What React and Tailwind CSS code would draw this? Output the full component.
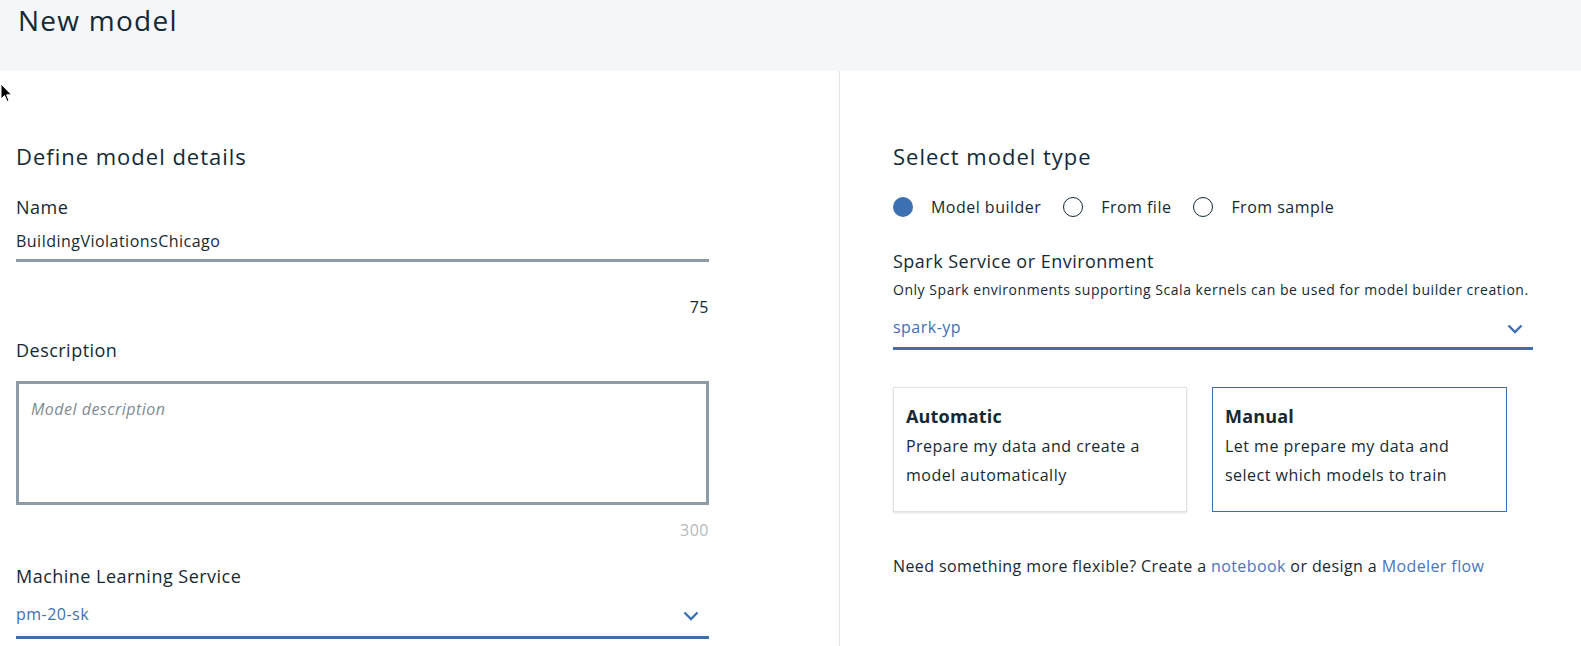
import React from "react";

function Chevron({ className = "" }) {
  return (
    <svg width="16" height="10" viewBox="0 0 16 10" className={className}>
      <path d="M1.5 1.5 L8 8 L14.5 1.5" fill="none" stroke="#3d70b2" strokeWidth="2.4" />
    </svg>
  );
}

function Radio({ checked, label }) {
  return (
    <div className="flex items-center">
      {checked ? (
        <span className="w-[20px] h-[20px] rounded-full bg-[#3d70b2] inline-block" />
      ) : (
        <span className="w-[20px] h-[20px] rounded-full border-[1.5px] border-[#152935] inline-block" />
      )}
      <span className="ml-[18px] text-[16px] leading-[24px] text-[#152935]">{label}</span>
    </div>
  );
}

export default function App() {
  return (
    <div
      className="relative w-[1581px] h-[646px] overflow-hidden bg-white text-[#152935] tracking-[0.03em]"
      style={{ fontFamily: "'Open Sans', 'Liberation Sans', sans-serif" }}
    >
      <header className="h-[71px] bg-[#f4f6fa] pl-[18px] pt-[2px]">
        <h1 className="text-[28px] leading-[36px] font-normal text-[#152935] tracking-[0.045em]">New model</h1>
      </header>

      <div className="flex h-[575px]">
        <section className="w-[839px] pl-[16px] pr-[130px] pt-[71px] flex flex-col">
          <h2 className="text-[22px] leading-[28px] font-normal tracking-[0.045em]">Define model details</h2>
          <div className="mt-[25px] text-[18px] leading-[24px]">Name</div>
          <div className="mt-[10px] pb-[6px] border-b-[3px] border-[#8c9ba5] text-[16px] leading-[24px]">
            BuildingViolationsChicago
          </div>
          <div className="mt-[33px] text-right text-[16px] leading-[24px]">75</div>
          <div className="mt-[19px] text-[18px] leading-[24px]">Description</div>
          <div className="mt-[19px] h-[124px] border-[3px] border-[#8c9ba5] px-[12px] pt-[13px]">
            <span className="italic text-[16px] leading-[24px] text-[#7f8b93]">Model description</span>
          </div>
          <div className="mt-[13px] text-right text-[16px] leading-[24px] text-[#b4b9bd]">300</div>
          <div className="mt-[22px] text-[18px] leading-[24px]">Machine Learning Service</div>
          <div className="mt-[14px] pb-[10px] border-b-[3px] border-[#3d70b2] flex items-center justify-between">
            <span className="text-[16px] leading-[24px] text-[#3d70b2]">pm-20-sk</span>
            <Chevron className="mr-[10px] mt-[4px]" />
          </div>
        </section>

        <div className="w-[1px] bg-[#dfe3e6]" />

        <section className="flex-1 pl-[53px] pr-[48px] pt-[71px] flex flex-col">
          <h2 className="text-[22px] leading-[28px] font-normal tracking-[0.045em]">Select model type</h2>
          <div className="mt-[25px] flex items-center gap-[22px] h-[24px]">
            <Radio checked label="Model builder" />
            <Radio label="From file" />
            <Radio label="From sample" />
          </div>
          <div className="mt-[30px] text-[18px] leading-[24px]">Spark Service or Environment</div>
          <div className="mt-[7px] text-[14px] leading-[20px] tracking-[0.038em] whitespace-nowrap">
            Only Spark environments supporting Scala kernels can be used for model builder creation.
          </div>
          <div className="mt-[15px] pb-[8px] border-b-[3px] border-[#3d70b2] flex items-center justify-between">
            <span className="text-[16px] leading-[24px] text-[#3d70b2]">spark-yp</span>
            <Chevron className="mr-[10px] mt-[4px]" />
          </div>

          <div className="mt-[37px] flex gap-[25px]">
            <div className="w-[294px] h-[125px] border border-[#dfe3e6] shadow-[0_1px_2px_rgba(0,0,0,0.12)] px-[12px] pt-[16px]">
              <div className="text-[18px] leading-[24px] font-bold tracking-[0.01em]">Automatic</div>
              <div className="mt-[4px] text-[16px] leading-[29px]">
                Prepare my data and create a<br />model automatically
              </div>
            </div>
            <div className="w-[295px] h-[125px] border border-[#3d70b2] px-[12px] pt-[16px]">
              <div className="text-[18px] leading-[24px] font-bold tracking-[0.01em]">Manual</div>
              <div className="mt-[4px] text-[16px] leading-[29px]">
                Let me prepare my data and<br />select which models to train
              </div>
            </div>
          </div>

          <div className="mt-[42px] text-[16px] leading-[24px] tracking-[0.025em]">
            Need something more flexible? Create a{" "}
            <span className="text-[#4a74bb]">notebook</span> or design a{" "}
            <span className="text-[#4a74bb]">Modeler flow</span>
          </div>
        </section>
      </div>

      <svg className="absolute left-0 top-[83px]" width="13" height="21" viewBox="0 0 13 21">
        <path d="M1 1 L1 16 L4.5 12.5 L7 18.5 L9 17.6 L6.6 11.8 L11.5 11.8 Z" fill="#000" stroke="#fff" strokeWidth="1" />
      </svg>
    </div>
  );
}
